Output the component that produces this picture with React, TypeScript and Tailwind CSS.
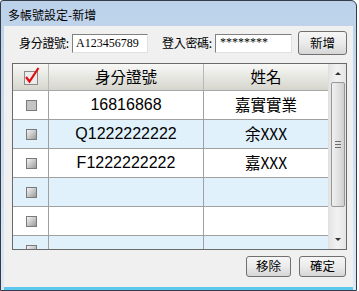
import React from 'react'

const cjk = '"Noto Sans CJK TC", "Liberation Sans", sans-serif'

interface Row {
  id: string
  name: string
}

const rows: Row[] = [
  { id: '16816868', name: '嘉實實業' },
  { id: 'Q1222222222', name: '余XXX' },
  { id: 'F1222222222', name: '嘉XXX' },
  { id: '', name: '' },
  { id: '', name: '' },
  { id: '', name: '' },
]

function Box({ flat }: { flat?: boolean }) {
  return (
    <div
      className={`w-[11px] h-[11px] border border-[#7a7a7a] ${
        flat ? 'bg-[#c4c4c4]' : 'bg-gradient-to-br from-[#f4f4f4] via-[#c8c8c8] to-[#9a9a9a]'
      }`}
    />
  )
}

function HeaderCheck() {
  return (
    <svg width="16" height="20" viewBox="0 0 16 20" className="overflow-visible">
      <rect x="0.5" y="6.5" width="13" height="13" fill="#ececec" stroke="#8a8a8a" />
      <path d="M2 12 L5.5 16.5 L14.5 3" fill="none" stroke="#e01010" strokeWidth="2.2" />
    </svg>
  )
}

function Btn({ label, w }: { label: string; w: string }) {
  return (
    <div
      className={`${w} h-full flex items-center justify-center rounded-[3px] border border-[#707070] bg-gradient-to-b from-[#f6f6f6] via-[#ebebeb] to-[#d6d6d6] text-[12.5px] text-black`}
      style={{ fontFamily: cjk }}
    >
      {label}
    </div>
  )
}

export default function App() {
  return (
    <div className="w-[359px] h-[291px] bg-white">
      <div className="w-[357px] h-[291px] flex flex-col border border-[#333c48] rounded-tr-[6px] rounded-tl-[3px] overflow-hidden bg-gradient-to-b from-[#bcd2ea] to-[#dce8f5]">
        {/* title bar */}
        <div
          className="h-[25px] flex items-center pl-[7px] pt-[2px] text-[12px] text-black"
          style={{ fontFamily: cjk }}
        >
          多帳號設定-新增
        </div>

        {/* client */}
        <div className="flex-1 mx-[3px] mb-[3px] bg-[#f0f0f0] border-b-[1px] border-b-[#f0f0f0] shadow-[0_3px_0_#5cc8ee]">
          <div className="h-[260px] flex flex-col pl-[8px]">
            {/* inputs */}
            <div className="flex items-center h-[24px] mt-[5px] whitespace-nowrap" style={{ fontFamily: cjk }}>
              <span className="ml-[7px] w-[53px] shrink-0 text-[12px] text-black leading-none whitespace-nowrap tracking-[-0.3px]">身分證號:</span>
              <div className="w-[76px] h-[19px] shrink-0 bg-white border border-t-[#808080] border-l-[#808080] border-r-[#e0e0e0] border-b-[#e0e0e0] flex items-center pl-[3px] text-[12px] text-black font-['Liberation_Serif',serif]">
                A123456789
              </div>
              <span className="ml-[14px] w-[53px] shrink-0 text-[12px] text-black leading-none whitespace-nowrap tracking-[-0.3px]">登入密碼:</span>
              <div className="w-[77px] h-[19px] shrink-0 bg-white border border-t-[#808080] border-l-[#808080] border-r-[#e0e0e0] border-b-[#e0e0e0] flex items-start pl-[4px] pt-[1px] text-[12px] text-black font-['Liberation_Serif',serif] leading-none">
                ********
              </div>
              <div className="ml-[6px] h-[24px] shrink-0">
                <Btn label="新增" w="w-[49px]" />
              </div>
            </div>

            {/* table */}
            <div className="mt-[8px] w-[335px] h-[187px] border border-[#6a6a6a] flex bg-white">
              <div className="flex-1 flex flex-col overflow-hidden">
                <div
                  className="h-[27px] shrink-0 flex border-b border-[#a8a8a8] bg-gradient-to-b from-[#f8f8f6] to-[#d6d6ce] text-[15.5px] text-black"
                  style={{ fontFamily: cjk }}
                >
                  <div className="w-[36px] border-r border-[#b8b8b8] flex items-center justify-center pb-[4px] pl-[2px]">
                    <HeaderCheck />
                  </div>
                  <div className="w-[155px] border-r border-[#b8b8b8] flex items-center justify-center">身分證號</div>
                  <div className="flex-1 flex items-center justify-center">姓名</div>
                </div>
                {rows.map((r, i) => (
                  <div
                    key={i}
                    className={`h-[29px] shrink-0 flex border-b border-[#a0a0a0] text-black ${
                      i % 2 === 1 ? 'bg-[#e0f1fb]' : 'bg-white'
                    }`}
                  >
                    <div className="w-[36px] border-r border-[#a0a0a0] flex items-center justify-center pl-[2px]">
                      <Box flat={i === 0} />
                    </div>
                    <div
                      className="w-[155px] border-r border-[#a0a0a0] flex items-center justify-center text-[16px]"
                      style={{ fontFamily: '"Liberation Sans", sans-serif' }}
                    >
                      {r.id}
                    </div>
                    <div
                      className="flex-1 flex items-center justify-center text-[15.5px]"
                      style={{ fontFamily: cjk }}
                    >
                      {r.name}
                    </div>
                  </div>
                ))}
              </div>

              {/* scrollbar */}
              <div className="w-[18px] flex flex-col items-center bg-gradient-to-r from-[#e4e4e4] via-[#f2f2f2] to-[#e4e4e4] border-l border-[#e0e0e0]">
                <div className="h-[17px] flex items-center justify-center pt-[2px]">
                  <div className="w-0 h-0 border-l-[3px] border-r-[3px] border-b-[3px] border-l-transparent border-r-transparent border-b-[#333]" />
                </div>
                <div className="mt-[1px] w-[14px] h-[125px] rounded-[2px] border border-[#979797] bg-gradient-to-r from-[#f0f0f0] via-[#e2e2e2] to-[#cfcfcf] flex flex-col items-center justify-center gap-[2px]">
                  <div className="w-[6px] h-[1px] bg-[#6d6d6d]" />
                  <div className="w-[6px] h-[1px] bg-[#6d6d6d]" />
                  <div className="w-[6px] h-[1px] bg-[#6d6d6d]" />
                </div>
                <div className="flex-1" />
                <div className="h-[17px] flex items-center justify-center pb-[2px]">
                  <div className="w-0 h-0 border-l-[3px] border-r-[3px] border-t-[3px] border-l-transparent border-r-transparent border-t-[#333]" />
                </div>
              </div>
            </div>

            {/* bottom buttons */}
            <div className="flex h-[21px] mt-[6px] pl-[234px] gap-[8px]">
              <Btn label="移除" w="w-[45px]" />
              <Btn label="確定" w="w-[47px]" />
            </div>
          </div>
        </div>
      </div>
    </div>
  )
}
